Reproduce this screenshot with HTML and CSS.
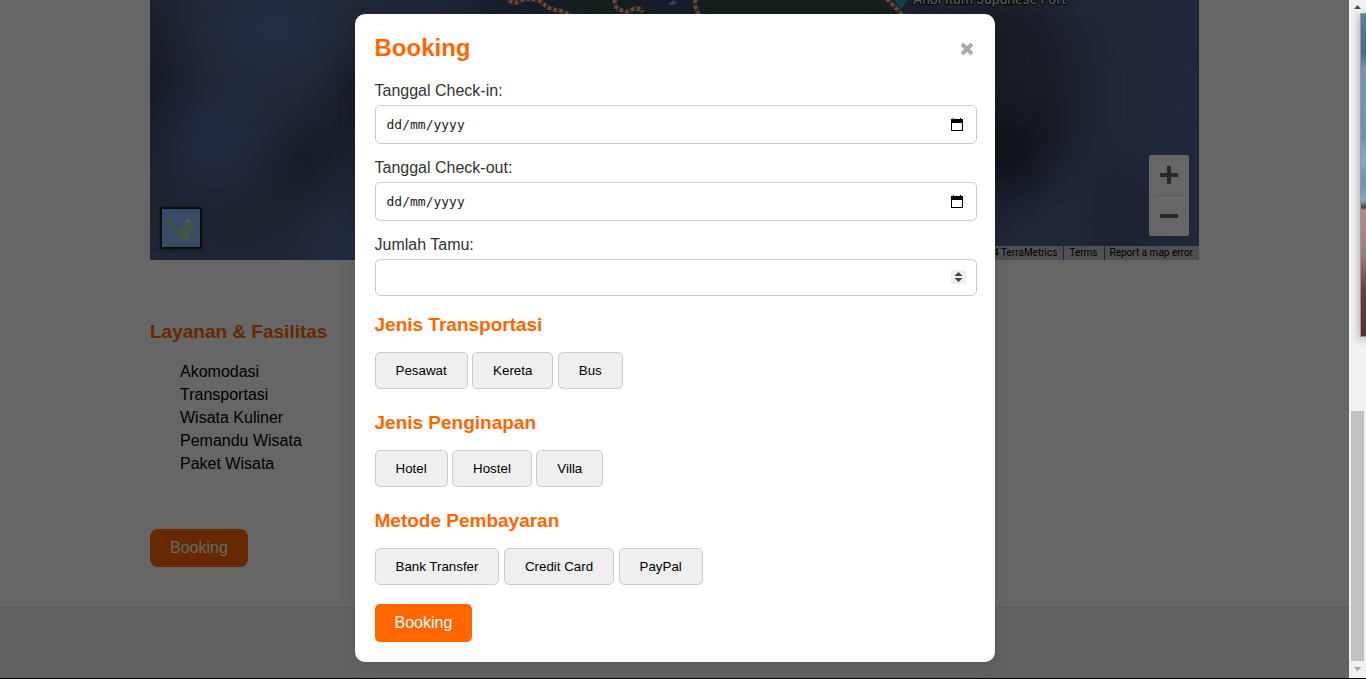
FILE: index.html
```html
<!DOCTYPE html>
<html lang="id">
<head>
<meta charset="utf-8">
<meta name="viewport" content="width=device-width, initial-scale=1">
<title>Booking</title>
<link rel="stylesheet" href="styles.css">
</head>
<body>
<div class="window">
  <div class="page">
    <main class="content">
      <div class="map">
        <svg class="map-canvas" viewBox="0 0 1049 260" preserveAspectRatio="xMidYMid slice" aria-hidden="true">
          <defs>
            <filter id="soft" x="-100%" y="-100%" width="300%" height="300%"><feGaussianBlur stdDeviation="26"/></filter>
            <filter id="coast" x="-10%" y="-50%" width="120%" height="200%"><feGaussianBlur stdDeviation="2"/></filter>
          </defs>
          <rect width="1049" height="260" fill="#50618a"/>
          <g filter="url(#soft)">
            <ellipse cx="-10" cy="90" rx="35" ry="120" fill="#3c475a"/>
            <ellipse cx="10" cy="90" rx="32" ry="25" fill="#333d50"/>
            <ellipse cx="125" cy="28" rx="60" ry="40" fill="#5c73b0"/>
            <ellipse cx="62" cy="135" rx="46" ry="32" fill="#576cb0"/>
            <ellipse cx="215" cy="90" rx="30" ry="45" fill="#333c4e"/>
            <ellipse cx="155" cy="160" rx="46" ry="26" transform="rotate(-35 155 160)" fill="#333c4c"/>
            <ellipse cx="90" cy="225" rx="90" ry="25" fill="#4a5270"/>
            <ellipse cx="200" cy="255" rx="45" ry="28" fill="#5c72b0"/>
            <rect x="320" y="-30" width="450" height="60" fill="#33445c"/>
            <ellipse cx="860" cy="90" rx="70" ry="110" fill="#3f475c"/>
            <ellipse cx="865" cy="160" rx="44" ry="44" fill="#1f2633"/>
            <ellipse cx="915" cy="205" rx="26" ry="38" fill="#5b6c96"/>
            <ellipse cx="862" cy="238" rx="45" ry="22" fill="#515f92"/>
            <ellipse cx="965" cy="215" rx="28" ry="50" fill="#40496b"/>
            <ellipse cx="1035" cy="90" rx="30" ry="130" fill="#52639a"/>
          </g>
          <g filter="url(#coast)" fill="#384f48">
            <path d="M380-4 408-2 450 16H505L474-4Z"/>
            <path d="M464-4 474 9 505 16H478Z"/>
            <path d="M546-4 560 16H758L738-4Z"/>
          </g>
          <g fill="none" stroke-width="4">
            <g stroke="#d8d2cc">
              <path d="M357-1Q364 5 370 1T390 1Q398 9 406 10T424 17"/>
              <path d="M465-3Q463 8 471 10Q474 14 481 10T493 12"/>
              <path d="M546-3Q543 6 549 15M735-3 750 12 752 16"/>
            </g>
            <g stroke="#cc3f2c" stroke-dasharray="3 3">
              <path d="M357-1Q364 5 370 1T390 1Q398 9 406 10T424 17"/>
              <path d="M465-3Q463 8 471 10Q474 14 481 10T493 12"/>
              <path d="M546-3Q543 6 549 15M735-3 750 12 752 16"/>
            </g>
          </g>
          <path d="M525-2 521 3 527 2M519 4 525 4" fill="none" stroke="#c9d0da" stroke-width="1"/>
          <path d="M742-2H760L751 10Z" fill="#22a6b8" stroke="#175a68"/>
          <text class="place" x="763" y="4">Anoi Itam Japanese Fort</text>
          <text class="watermark" x="70" y="77">© 2024 Google</text>
          <text class="watermark" x="842" y="13">© 2024 Google</text>
        </svg>
        <button class="layer" type="button" aria-label="Tampilan peta">
          <svg viewBox="0 0 38 38" aria-hidden="true">
            <rect width="38" height="38" fill="#90b8fa"/>
            <path d="M5 8 9 11 12 16 15 19 20 19 24 13 29 15 33 19 33 25 30 22 28 23 28 29 24 31 19 30 15 25 14 20 9 17 5 13Z" fill="#a8d8ac"/>
            <path d="M15 19 19 19 19 30 15 25 14 20 9 17 5 13 5 8 9 11Z" fill="#98cc9c"/>
            <path d="M24 9 29 11 30 14H24Z" fill="#dcd6d2"/>
          </svg>
        </button>
        <div class="zoom">
          <button type="button" aria-label="Perbesar"><svg viewBox="0 0 18 18" aria-hidden="true"><path d="M7 0h4v7h7v4h-7v7H7v-7H0V7h7z"/></svg></button>
          <button type="button" aria-label="Perkecil"><svg viewBox="0 0 18 18" aria-hidden="true"><path d="M0 7h18v4H0z"/></svg></button>
        </div>
        <div class="credits">
          <span>Imagery ©2024 TerraMetrics</span>
          <a href="#terms">Terms</a>
          <a href="#report">Report a map error</a>
        </div>
      </div>
      <section class="services">
        <h3>Layanan &amp; Fasilitas</h3>
        <ul>
          <li>Akomodasi</li>
          <li>Transportasi</li>
          <li>Wisata Kuliner</li>
          <li>Pemandu Wisata</li>
          <li>Paket Wisata</li>
        </ul>
      </section>
      <button class="primary open-booking" type="button">Booking</button>
    </main>
    <footer class="footer"></footer>

    <div class="overlay">
      <form class="modal" role="dialog" aria-labelledby="booking-title">
        <header class="modal-head">
          <h2 id="booking-title">Booking</h2>
          <button class="close" type="button" aria-label="Tutup">
            <svg viewBox="0 0 14 14" aria-hidden="true"><path d="M2 2 12 12M12 2 2 12"/></svg>
          </button>
        </header>
        <div class="field">
          <label for="checkin">Tanggal Check-in:</label>
          <div class="control">
            <input class="date" id="checkin" type="text" placeholder="dd/mm/yyyy">
            <svg class="calendar" viewBox="0 0 12 13" aria-hidden="true"><path d="M2 0h1v1h6V0h1v1h2v12H0V1h2zM1 5v7h10V5z" fill-rule="evenodd"/></svg>
          </div>
        </div>
        <div class="field">
          <label for="checkout">Tanggal Check-out:</label>
          <div class="control">
            <input class="date" id="checkout" type="text" placeholder="dd/mm/yyyy">
            <svg class="calendar" viewBox="0 0 12 13" aria-hidden="true"><path d="M2 0h1v1h6V0h1v1h2v12H0V1h2zM1 5v7h10V5z" fill-rule="evenodd"/></svg>
          </div>
        </div>
        <div class="field">
          <label for="guests">Jumlah Tamu:</label>
          <div class="control">
            <input class="number" id="guests" type="number" min="1">
            <svg class="spinner" viewBox="0 0 15 14" aria-hidden="true"><rect width="15" height="14" fill="#efefef"/><path d="M7.500 2 11.500 6h-8zM7.500 12 11.500 8h-8z" fill="#444"/></svg>
          </div>
        </div>
        <h3 class="first">Jenis Transportasi</h3>
        <div class="options">
          <button type="button">Pesawat</button>
          <button type="button">Kereta</button>
          <button type="button">Bus</button>
        </div>
        <h3>Jenis Penginapan</h3>
        <div class="options">
          <button type="button">Hotel</button>
          <button type="button">Hostel</button>
          <button type="button">Villa</button>
        </div>
        <h3>Metode Pembayaran</h3>
        <div class="options">
          <button type="button">Bank Transfer</button>
          <button type="button">Credit Card</button>
          <button type="button">PayPal</button>
        </div>
        <button class="primary submit" type="submit">Booking</button>
      </form>
    </div>
  </div>
  <div class="scrollbar" aria-hidden="true">
    <svg class="arrow" viewBox="0 0 7 4"><path d="M0 4 3.500 0 7 4z" fill="#505050"/></svg>
    <div class="thumb"></div>
    <svg class="arrow" viewBox="0 0 7 4"><path d="M0 0 3.500 4 7 0z" fill="#a3a3a3"/></svg>
    <div class="preview"></div>
  </div>
</div>
</body>
</html>
```

FILE: styles.css
```css
* {
  box-sizing: border-box;
}

body {
  margin: 0;
  background: #000;
  font-family: "Liberation Sans", Arial, sans-serif;
  font-size: 16px;
  color: #000;
}

h2, h3, ul {
  margin: 0;
  padding: 0;
}

h2, h3 {
  color: #f60;
}

h2 {
  font-size: 24px;
  line-height: 28px;
}

h3 {
  font-size: 19px;
  line-height: 22px;
}

button {
  font-family: inherit;
}

svg {
  display: block;
}

.window {
  display: grid;
  grid-template-columns: 1fr 17px;
  height: 100vh;
  overflow: hidden;
  border-bottom: 1px solid #000;
}

.page {
  position: relative;
  display: flex;
  flex-direction: column;
  overflow: hidden;
  background: #fff;
}

.content {
  padding: 0 150px 40px;
}

.footer {
  flex: 1;
  border-top: 1px solid #e4e4e4;
  background: #f6f6f6;
}

/* Map */
.map {
  position: relative;
  height: 260px;
  overflow: hidden;
}

.map-canvas {
  width: 100%;
  height: 100%;
}

.place {
  font: 14px Roboto, sans-serif;
  fill: #e8e8e8;
  stroke: #111;
  stroke-width: 2px;
  paint-order: stroke;
}

.watermark {
  font: bold 12px "DejaVu Sans", sans-serif;
  fill: #8090b0;
  fill-opacity: 0.15;
}

.layer {
  position: absolute;
  left: 10px;
  bottom: 11px;
  width: 42px;
  height: 42px;
  padding: 0;
  border: 2px solid #222;
  border-radius: 2px;
  box-shadow: 0 1px 4px rgba(0, 0, 0, 0.3);
}

.layer svg {
  width: 100%;
  height: 100%;
}

.zoom {
  position: absolute;
  right: 10px;
  bottom: 24px;
  display: flex;
  flex-direction: column;
  width: 40px;
  border-radius: 2px;
  background: #fff;
}

.zoom button {
  display: grid;
  place-items: center;
  height: 40px;
  padding: 0;
  border: 0;
  background: none;
}

.zoom button + button::before {
  content: "";
  width: 30px;
  height: 1px;
  background: #e0e0e0;
}

.zoom button + button {
  height: 41px;
  grid-template-rows: 1px 1fr;
}

.zoom svg {
  width: 18px;
  height: 18px;
  fill: #666;
}

.credits {
  position: absolute;
  right: 0;
  bottom: 0;
  display: flex;
  gap: 1px;
  font: 10px/14px Roboto, sans-serif;
}

.credits > * {
  padding: 0 6px 0 5px;
  background: rgba(245, 245, 245, 0.7);
  color: #000;
  text-decoration: none;
}

/* Services */
.services {
  padding: 61px 0 54px;
}

.services ul {
  margin-top: 17px;
  padding-left: 30px;
  list-style: none;
  line-height: 23px;
}

.primary {
  display: block;
  padding: 0 20px;
  border: 0;
  background: #f60;
  color: #fff;
  font-size: 16px;
  line-height: 38px;
}

.open-booking {
  border-radius: 8px;
}

/* Booking dialog */
.overlay {
  position: absolute;
  inset: 0;
  display: flex;
  justify-content: center;
  align-items: flex-start;
  padding-top: 14px;
  background: rgba(0, 0, 0, 0.6);
}

.modal {
  width: 100%;
  max-width: 640px;
  padding: 20px 18px 20px 20px;
  border-radius: 10px;
  background: #fff;
  box-shadow: 0 4px 20px rgba(0, 0, 0, 0.1);
}

.modal-head {
  display: flex;
  justify-content: space-between;
  align-items: center;
  margin-bottom: 18px;
}

.close {
  padding: 5px 3px 3px;
  border: 0;
  background: none;
}

.close svg {
  width: 14px;
  height: 14px;
  fill: none;
  stroke: #aaa;
  stroke-width: 4;
}

.field {
  margin-bottom: 13px;
}

.field label {
  display: block;
  margin-bottom: 3px;
  color: #333;
  line-height: 22px;
}

.control {
  position: relative;
}

.control input {
  display: block;
  width: 100%;
  height: 39px;
  padding: 0 11px;
  border: 1px solid #ccc;
  border-radius: 5px;
  background: #fff;
  color: #000;
}

.control .date {
  font: 13px "DejaVu Sans Mono", monospace;
}

.date::placeholder {
  color: #222;
}

.control .number {
  height: 37px;
  appearance: textfield;
}

.calendar {
  position: absolute;
  top: 13px;
  right: 14px;
  width: 12px;
  height: 13px;
}

.spinner {
  position: absolute;
  top: 11px;
  right: 11px;
  width: 15px;
  height: 14px;
}

.modal h3 {
  margin: 23px 0 16px;
}

.modal .first {
  margin-top: 18px;
}

.options button {
  height: 37px;
  padding: 0 20px;
  border: 1px solid #ccc;
  border-radius: 5px;
  background: #efefef;
  color: #000;
}

.options {
  display: flow-root;
  height: 37px;
}

.submit {
  margin-top: 19px;
  border-radius: 5px;
}

/* Scroll bar */
.scrollbar {
  position: relative;
  display: flex;
  flex-direction: column;
  align-items: center;
  justify-content: space-between;
  padding: 5px 0 7px;
  background: #f1f1f1;
}

.arrow {
  width: 7px;
  height: 4px;
}

.thumb {
  width: 13px;
  height: 250px;
  margin: auto 0 6px;
  background: #c1c1c1;
}

.preview {
  position: absolute;
  top: 13px;
  right: 0;
  width: 6px;
  height: 324px;
  border: 1px solid #999;
  border-right: 0;
  background: linear-gradient(#5a8494, #456f81 12%, #7599ab 17%, #6f94a8 38%, #86aac2 45%, #6f96ac 52%, #88a8ba 58%, #593d44 60%, #b58d88 61%, #a07c78 75%, #654544 85%, #4f2f30);
  box-shadow: 0 2px 8px rgba(0, 0, 0, 0.4);
}
```
